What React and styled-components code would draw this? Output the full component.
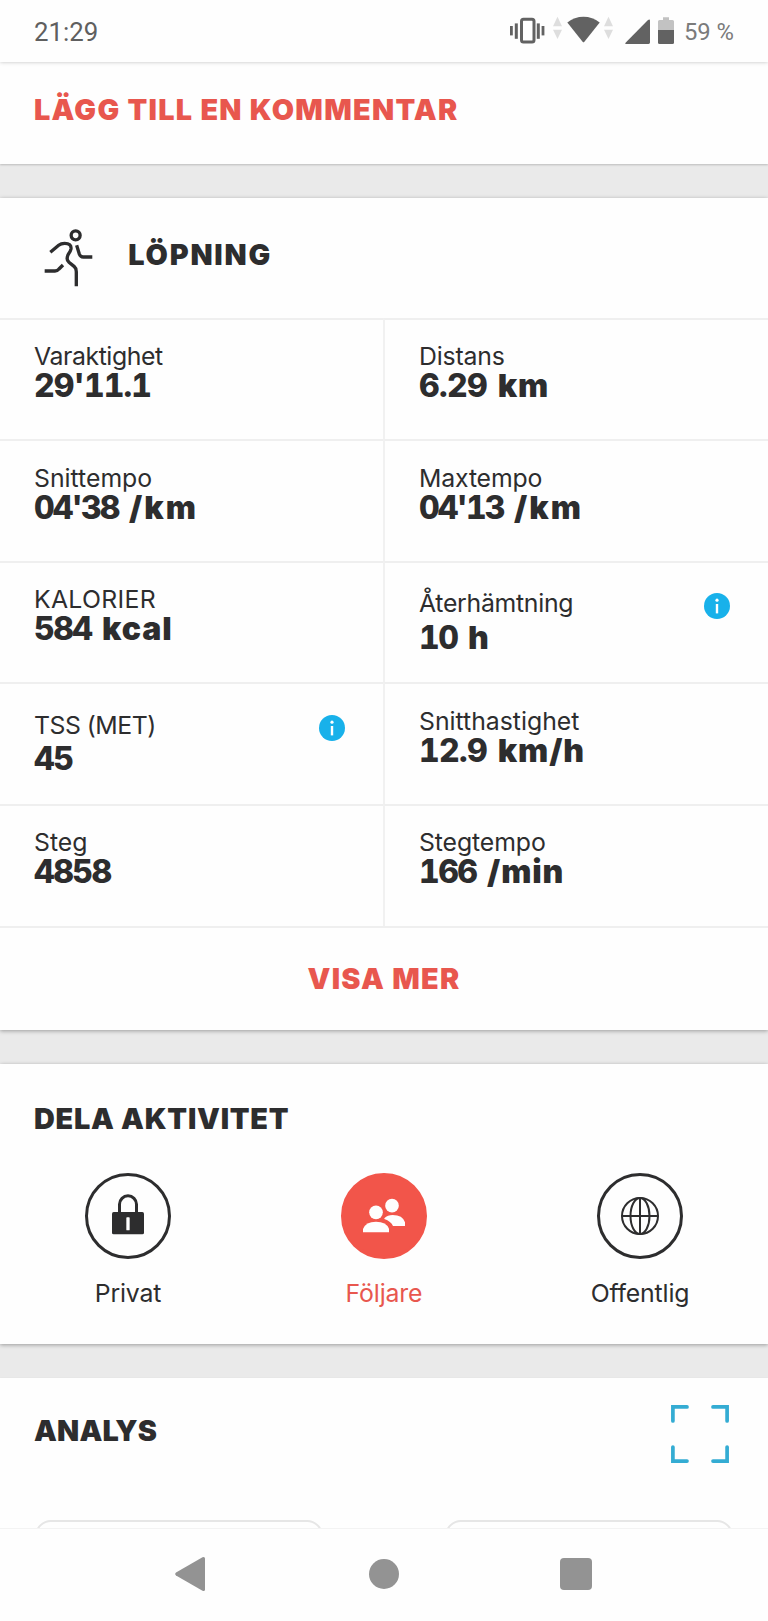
import styled, { createGlobalStyle } from "styled-components";

const GlobalStyle = createGlobalStyle`
  * {
    box-sizing: border-box;
  }

  body {
    margin: 0;
    background: #eaeaea;
    color: #2d2d2e;
    font-family: Inter, "Liberation Sans", sans-serif;
  }
`;

const Screen = styled.div`
  width: 768px;
  height: 1621px;
  display: flex;
  flex-direction: column;
  overflow: hidden;
  background: #eaeaea;
`;

const StatusBar = styled.header`
  flex: none;
  height: 62px;
  padding: 0 34px;
  display: flex;
  justify-content: space-between;
  background: #fefefe;
  font-family: Roboto, "Liberation Sans", sans-serif;
  z-index: 1;
  box-shadow: 0 0 4px rgba(0, 0, 0, 0.25);
`;

const Clock = styled.span`
  margin-top: 17px;
  font-size: 25.8px;
  line-height: 30px;
  color: #5f5f5f;
`;

const StatusIcons = styled.div`
  display: flex;
  padding-top: 16px;

  svg {
    display: block;
    height: 30px;
  }
`;

const Battery = styled.span`
  margin-top: 1px;
  margin-left: 10px;
  font-size: 23.8px;
  line-height: 30px;
  color: #7b7b7b;
`;

const Scroll = styled.main`
  flex: none;
  height: 1466px;
  display: flex;
  flex-direction: column;
  overflow: hidden;
`;

const Card = styled.section`
  flex: none;
  height: ${(props) => props.height}px;
  margin-bottom: 34px;
  background: #fefefe;
  box-shadow: 0 1px ${(props) => (props.raised ? "4px" : "2px")}
    rgba(0, 0, 0, ${(props) => (props.raised ? 0.34 : 0.2)});
`;

const Title = styled.h2`
  margin: 0;
  font-size: 28.8px;
  font-weight: 900;
  line-height: 36px;
  white-space: nowrap;
  letter-spacing: ${(props) => props.spacing || 0}px;
  color: ${(props) => (props.accent ? "#e8574e" : "#2d2d2e")};
`;

const CommentCard = styled(Card)`
  padding: 30px 34px 0;
`;

const SportHeader = styled.div`
  height: 119.6px;
  padding: 29px 0 0 42.5px;
  display: flex;
  gap: 34.5px;

  svg {
    width: 51.3px;
    height: 61.3px;
  }

  h2 {
    margin-top: 10px;
  }
`;

const Stats = styled.div`
  display: grid;
  grid-template-columns: 383px 385px;
  grid-auto-rows: 121.6px;
`;

const Stat = styled.div`
  display: flex;
  justify-content: space-between;
  padding: ${(props) => (props.info ? "25.5px" : "21.5px")} 38px 0 34px;
  border-top: 2px solid #efefef;

  &:nth-child(even) {
    border-left: 2px solid #f1f1f1;
  }
`;

const Label = styled.div`
  font-size: 24.8px;
  line-height: 30px;
  white-space: nowrap;
  letter-spacing: ${(props) => props.spacing || 0}px;
`;

const Value = styled.div`
  margin-top: ${(props) => (props.info ? "4.5px" : 0)};
  font-size: 32px;
  font-weight: 900;
  font-variant-numeric: tabular-nums;
  line-height: 29px;
  white-space: nowrap;
`;

const Figure = styled.span`
  font-weight: 800;
  letter-spacing: ${(props) => props.spacing || -1.5}px;
`;

const Unit = styled.span`
  margin-left: 2px;
  letter-spacing: ${(props) => props.spacing || 0.9}px;
`;

const InfoBadge = styled.svg`
  width: 26px;
  height: 26px;
  margin-top: 5px;
`;

const ShowMore = styled.button`
  width: 100%;
  height: 104px;
  padding: 0;
  display: block;
  border: 0;
  border-top: 2px solid #efefef;
  background: none;
  font-family: inherit;
  text-align: center;
`;

const ShareCard = styled(Card)`
  padding-top: 36.5px;

  h2 {
    margin-left: 34px;
  }
`;

const ShareOptions = styled.div`
  margin-top: 36.5px;
  display: grid;
  grid-template-columns: repeat(3, 1fr);
`;

const ShareOption = styled.div`
  display: flex;
  flex-direction: column;
  align-items: center;
  gap: 19px;
  color: ${(props) => (props.active ? "#e8574e" : "#2d2d2e")};
`;

const Circle = styled.div`
  width: 86px;
  height: 86px;
  display: flex;
  align-items: center;
  justify-content: center;
  border: 3px solid ${(props) => (props.active ? "#f2554a" : "#2d2d2e")};
  border-radius: 50%;
  background: ${(props) => (props.active ? "#f2554a" : "transparent")};

  svg {
    width: 48px;
    height: 48px;
  }
`;

const AnalysisCard = styled(Card)`
  margin-bottom: 0;
`;

const AnalysisHeader = styled.div`
  height: 142px;
  padding: 27px 39px 0 34px;
  display: flex;
  justify-content: space-between;

  h2 {
    margin-top: 8px;
  }

  svg {
    width: 58px;
    height: 58px;
  }
`;

const ChartRow = styled.div`
  padding: 0 35px;
  display: flex;
  justify-content: space-between;
`;

const ChartBox = styled.div`
  width: 288px;
  height: 200px;
  border: 2px solid #e6e6e6;
  border-radius: 16px;
`;

const NavBar = styled.nav`
  flex: none;
  height: 93px;
  padding: 0 96px 2px;
  display: grid;
  grid-template-columns: repeat(3, 1fr);
  place-items: center;
  border-top: 1px solid #f3f3f3;
  background: #fefefe;
`;

const VibrateIcon = () => (
  <svg width="35" height="30" viewBox="0 0 35 30" fill="#626262">
    <rect x="11.5" y="3.2" width="12.5" height="22.8" rx="2" fill="none" stroke="#626262" strokeWidth="3" />
    <rect x="0" y="10" width="2.8" height="9.4" />
    <rect x="4.8" y="7.4" width="3" height="15.4" />
    <rect x="26.8" y="7.4" width="3" height="15.4" />
    <rect x="31.6" y="10" width="2.8" height="9.4" />
  </svg>
);

const DataArrows = () => (
  <svg width="9" height="30" viewBox="0 0 9 30" fill="#dedede">
    <path d="M0 10.3L4.5 .7L9 10.3ZM0 13.7H9L4.5 23Z" />
  </svg>
);

const WifiIcon = () => (
  <svg width="33" height="30" viewBox="0 0 33 30" fill="#626262">
    <path d="M.3 6.4Q7.5 .8 16.5 .8T32.7 6.4L17.4 25.8Q16.5 26.9 15.6 25.8Z" />
  </svg>
);

const SignalIcon = () => (
  <svg width="25" height="30" viewBox="0 0 25 30" fill="#626262">
    <path d="M.8 26.4L23 3.9Q25 2.6 25 4.6V26.6Q25 28 23.6 28H1.2Q-.4 27.8 .8 26.4Z" />
  </svg>
);

const BatteryIcon = () => (
  <svg width="16" height="30" viewBox="0 0 16 30">
    <path d="M5 1.2H11V4H14.5Q16 4 16 5.5V14H0V5.5Q0 4 1.5 4H5Z" fill="#c2c2c2" />
    <path d="M0 14H16V26.5Q16 28 14.5 28H1.5Q0 28 0 26.5Z" fill="#626262" />
  </svg>
);

const IconSlot = styled.span`
  margin-left: ${(props) => props.gap || 0}px;
`;

const RunnerIcon = () => (
  <svg viewBox="128 112 154 184" fill="none" stroke="#2d2d2e" strokeWidth="10">
    <circle cx="226" cy="137" r="13.5" />
    <path d="M150 188L175 167Q182 161 193 161Q214 161 212 178Q211 184 204 194Q196 209 206 218L222 231Q228 236 228 246V290" />
    <path d="M229 167L237 193Q240 202 249 202H276" />
    <path d="M133 244H164Q171 244 176 238L188 226" />
  </svg>
);

const LockIcon = () => (
  <svg viewBox="312 425 144 144">
    <path d="M358.5 488V462A25.5 25.5 0 0 1 409.5 462V488" fill="none" stroke="#2d2d2e" strokeWidth="9" />
    <rect x="336" y="485" width="96" height="67" rx="5" fill="#2d2d2e" />
    <rect x="379" y="501" width="10" height="39" rx="2" fill="#fefefe" />
  </svg>
);

const FollowersIcon = () => (
  <svg viewBox="120 125 144 144" fill="#fefefe">
    <circle cx="168" cy="186" r="20.5" />
    <path d="M129 246V236Q137 214 168 214T207 235V246Z" />
    <circle cx="216" cy="166" r="20.5" />
    <path d="M193 204Q203 194 218 194Q248 194 255 216V227H219Q213 213 193 206Z" />
  </svg>
);

const GlobeIcon = () => (
  <svg viewBox="888 126 144 144" fill="none" stroke="#2d2d2e" strokeWidth="6">
    <circle cx="960" cy="198" r="54" />
    <ellipse cx="960" cy="198" rx="28.5" ry="54" />
    <path d="M960 143V253M905 198H1015" />
  </svg>
);

const ExpandIcon = () => (
  <svg viewBox="0 0 58 58" fill="none" stroke="#34acd3" strokeWidth="3.7" strokeLinecap="round">
    <path d="M16 1.9H1.9V16M42 1.9H56.1V16M1.9 42V56.1H16M42 56.1H56.1V42" />
  </svg>
);

const InfoIcon = () => (
  <InfoBadge viewBox="0 0 26 26">
    <circle cx="13" cy="13" r="13" fill="#18b1ea" />
    <circle cx="13" cy="7.2" r="1.6" fill="#fff" />
    <rect x="11.8" y="11" width="2.4" height="9.4" fill="#fff" />
  </InfoBadge>
);

const stats = [
  { label: "Varaktighet", value: "29'11.1", labelSpacing: -0.4, valueSpacing: -0.9 },
  { label: "Distans", value: "6.29", unit: "km", labelSpacing: -0.17, valueSpacing: -0.6 },
  { label: "Snittempo", value: "04'38", unit: "/km", valueSpacing: -1.9, unitSpacing: 2 },
  { label: "Maxtempo", value: "04'13", unit: "/km", labelSpacing: -0.15, valueSpacing: -1.9, unitSpacing: 2 },
  { label: "KALORIER", value: "584", unit: "kcal", labelSpacing: 0.3 },
  { label: "Återhämtning", value: "10", unit: "h", info: true, labelSpacing: -0.28 },
  { label: "TSS (MET)", value: "45", info: true, labelSpacing: -0.5 },
  { label: "Snitthastighet", value: "12.9", unit: "km/h", valueSpacing: -0.6 },
  { label: "Steg", value: "4858" },
  { label: "Stegtempo", value: "166", unit: "/min", labelSpacing: -0.1 },
];

const shareOptions = [
  { label: "Privat", icon: <LockIcon /> },
  { label: "Följare", icon: <FollowersIcon />, active: true },
  { label: "Offentlig", icon: <GlobeIcon /> },
];

const App = () => {
  return (
    <Screen>
      <GlobalStyle />
      <StatusBar>
        <Clock>21:29</Clock>
        <StatusIcons>
          <IconSlot><VibrateIcon /></IconSlot>
          <IconSlot gap={8}><DataArrows /></IconSlot>
          <IconSlot gap={5}><WifiIcon /></IconSlot>
          <IconSlot gap={4}><DataArrows /></IconSlot>
          <IconSlot gap={12}><SignalIcon /></IconSlot>
          <IconSlot gap={8}><BatteryIcon /></IconSlot>
          <Battery>59 %</Battery>
        </StatusIcons>
      </StatusBar>

      <Scroll>
        <CommentCard height={102}>
          <Title accent spacing={1.3}>LÄGG TILL EN KOMMENTAR</Title>
        </CommentCard>

        <Card height={832} raised>
          <SportHeader>
            <RunnerIcon />
            <Title spacing={1.8}>LÖPNING</Title>
          </SportHeader>
          <Stats>
            {stats.map((stat) => (
              <Stat key={stat.label} info={stat.info ? 1 : 0}>
                <div>
                  <Label spacing={stat.labelSpacing}>{stat.label}</Label>
                  <Value info={stat.info ? 1 : 0}>
                    <Figure spacing={stat.valueSpacing}>{stat.value}</Figure>
                    {stat.unit && <> <Unit spacing={stat.unitSpacing}>{stat.unit}</Unit></>}
                  </Value>
                </div>
                {stat.info && <InfoIcon />}
              </Stat>
            ))}
          </Stats>
          <ShowMore>
            <Title as="span" accent spacing={1.3}>VISA MER</Title>
          </ShowMore>
        </Card>

        <ShareCard height={280} raised>
          <Title spacing={0.75}>DELA AKTIVITET</Title>
          <ShareOptions>
            {shareOptions.map((option) => (
              <ShareOption key={option.label} active={option.active}>
                <Circle active={option.active}>{option.icon}</Circle>
                <Label spacing={-0.15}>{option.label}</Label>
              </ShareOption>
            ))}
          </ShareOptions>
        </ShareCard>

        <AnalysisCard height={300}>
          <AnalysisHeader>
            <Title spacing={0.2}>ANALYS</Title>
            <ExpandIcon />
          </AnalysisHeader>
          <ChartRow>
            <ChartBox />
            <ChartBox />
          </ChartRow>
        </AnalysisCard>
      </Scroll>

      <NavBar>
        <svg width="34" height="36" viewBox="0 0 34 36" fill="#939393">
          <path d="M1 16.5Q-.6 18 1 19.5L27.5 34.8Q30 35.6 30 33.4V2.6Q30 .4 27.5 1.2Z" />
        </svg>
        <svg width="32" height="32" viewBox="0 0 32 32" fill="#939393">
          <circle cx="16" cy="16" r="15" />
        </svg>
        <svg width="32" height="32" viewBox="0 0 32 32" fill="#939393">
          <rect width="32" height="32" rx="4" />
        </svg>
      </NavBar>
    </Screen>
  );
};

export default App;
